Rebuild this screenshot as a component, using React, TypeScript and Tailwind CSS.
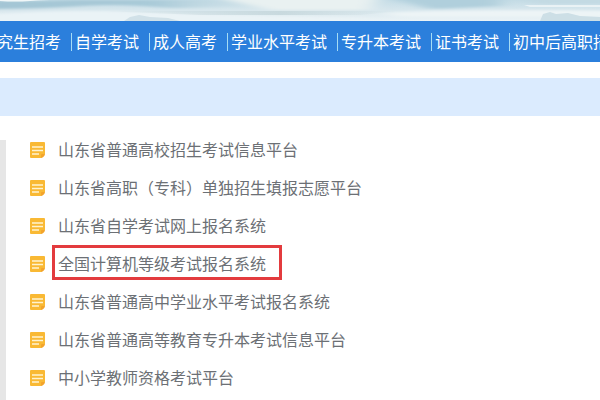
import React from 'react';

const navItems = ['究生招考', '自学考试', '成人高考', '学业水平考试', '专升本考试', '证书考试', '初中后高职招'];

const platforms = [
  { name: '山东省普通高校招生考试信息平台' },
  { name: '山东省高职（专科）单独招生填报志愿平台' },
  { name: '山东省自学考试网上报名系统' },
  { name: '全国计算机等级考试报名系统', marked: true },
  { name: '山东省普通高中学业水平考试报名系统' },
  { name: '山东省普通高等教育专升本考试信息平台' },
  { name: '中小学教师资格考试平台' },
];

const NoteIcon = () => (
  <svg width="15" height="16" viewBox="0 0 15 16" className="shrink-0" aria-hidden="true">
    <path d="M1 0H14Q15 0 15 1V11.5L11 16H1Q0 16 0 15V1Q0 0 1 0Z" fill="#f9b934" />
    <path d="M11 16V13Q11 12 12 12H15Q14.5 15 11 16Z" fill="#f3a42b" />
    <path d="M2 5H13M2 8.5H13M2 12H9" stroke="#fff3cf" strokeWidth="1.6" fill="none" />
  </svg>
);

const Banner = () => (
  <svg
    className="block h-[21px] w-full"
    viewBox="0 0 600 21"
    preserveAspectRatio="none"
    aria-hidden="true"
  >
    <defs>
      <linearGradient id="mist" x1="0" y1="0" x2="0" y2="1">
        <stop offset="0" stopColor="#c4dce6" />
        <stop offset="0.5" stopColor="#d8e7ed" />
        <stop offset="1" stopColor="#ebf3f6" />
      </linearGradient>
      <linearGradient id="ridge" x1="0" y1="0" x2="1" y2="0">
        <stop offset="0" stopColor="#a3c5d4" />
        <stop offset="0.6" stopColor="#a9cad8" />
        <stop offset="1" stopColor="#cfe1e7" stopOpacity="0" />
      </linearGradient>
      <linearGradient id="haze" x1="0" y1="0" x2="1" y2="0">
        <stop offset="0" stopColor="#c3d5da" stopOpacity="0" />
        <stop offset="0.6" stopColor="#c3d5da" />
        <stop offset="1" stopColor="#c3d5da" stopOpacity="0" />
      </linearGradient>
      <filter id="soft" x="-10%" y="-50%" width="120%" height="200%">
        <feGaussianBlur stdDeviation="9 1" />
      </filter>
    </defs>
    <rect width="600" height="21" fill="url(#mist)" />
    <g filter="url(#soft)">
      <path d="M-20 1H40L75 0H240L270 6L170 8Q120 3 80 6T-20 9Z" fill="url(#ridge)" />
      <path d="M210 -4H380L370 10H270Z" fill="#e9f1f1" />
      <path d="M385 -4H500V6L430 9Z" fill="#b0cfdc" />
      <path d="M500 -4H620V4H540Z" fill="#c3dae3" />
      <path d="M-20 15Q70 9 140 12T360 18V25H-20Z" fill="#eaf3f6" />
      <path d="M380 13Q470 9 620 11V17H400Z" fill="#edf4f6" />
    </g>
    <path d="M0 1Q15 2 30 1T50 0H0Z" fill="#f1f7f8" />
    <path d="M100 11H400L360 15H200Z" fill="url(#haze)" opacity="0.8" />
    <path d="M524 5H600V7H530Z" fill="#f0f6f7" opacity="0.8" />
    <path d="M124 21L130 17L139 15L150 17L168 18L180 21Z" fill="#d1e1e8" />
    <path d="M540 21L543 14L550 12L556 14L568 13L580 16L600 17V21Z" fill="#cddfe6" />
  </svg>
);

export default function App() {
  return (
    <div className="min-h-screen overflow-hidden bg-white font-['Noto_Sans_CJK_SC',sans-serif] text-[16px] leading-[22px]">
      <header>
        <Banner />
        <nav className="h-[41px] overflow-hidden bg-[#2b7fdc] text-white">
          <ul className="-ml-[3px] flex h-full items-center">
            {navItems.map((item) => (
              <li
                key={item}
                className="flex h-[18px] shrink-0 items-center border-l border-[#a5dcf4] pr-2.5 pl-[3px] first:border-l-0 first:pl-0"
              >
                <a href="#" className="whitespace-nowrap pb-0.5">{item}</a>
              </li>
            ))}
          </ul>
        </nav>
      </header>

      <div className="mt-4 h-[38px] bg-[#dbebfe]" />

      <main className="mt-[15px] flex">
        <aside className="mt-[9px] w-1.5 shrink-0 bg-[#e6e6e6]" />
        <ul className="min-h-[269px] flex-1 pl-6">
          {platforms.map((platform) => (
            <li key={platform.name} className="flex h-[38px] items-center gap-[13px]">
              <NoteIcon />
              <a href="#" className="relative whitespace-nowrap pb-0.5 text-[#6c7075]">
                {platform.name}
                {platform.marked && (
                  <span className="absolute -top-[7px] -right-4 -bottom-1 -left-1.5 border-3 border-[#e33b3e]" />
                )}
              </a>
            </li>
          ))}
        </ul>
      </main>
    </div>
  );
}
